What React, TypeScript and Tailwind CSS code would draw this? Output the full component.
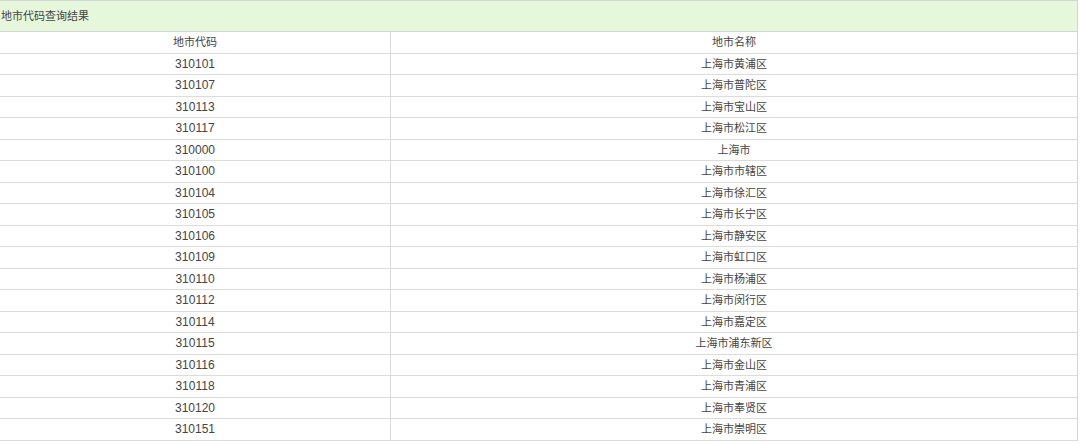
const rows: [string, string][] = [
  ['310101', '上海市黄浦区'],
  ['310107', '上海市普陀区'],
  ['310113', '上海市宝山区'],
  ['310117', '上海市松江区'],
  ['310000', '上海市'],
  ['310100', '上海市市辖区'],
  ['310104', '上海市徐汇区'],
  ['310105', '上海市长宁区'],
  ['310106', '上海市静安区'],
  ['310109', '上海市虹口区'],
  ['310110', '上海市杨浦区'],
  ['310112', '上海市闵行区'],
  ['310114', '上海市嘉定区'],
  ['310115', '上海市浦东新区'],
  ['310116', '上海市金山区'],
  ['310118', '上海市青浦区'],
  ['310120', '上海市奉贤区'],
  ['310151', '上海市崇明区'],
];

export default function App() {
  return (
    <div
      className="w-[1080px] h-[444px] bg-white overflow-hidden text-[12px] text-[#444]"
      style={{ fontFamily: '"Liberation Sans", Arial, "Noto Sans CJK SC", sans-serif' }}
    >
      <div className="w-[1078px] border-r border-[#d4d4d4]">
        {/* Title bar */}
        <div className="h-[32px] flex items-center pl-px text-[11px] bg-[#e6f7dc] border-t border-[#cfe3c6] border-b border-[#d4d4d4]">
          地市代码查询结果
        </div>

        {/* Table */}
        <div className="grid grid-cols-[391px_1fr]">
          <div className="h-[21.5px] flex items-center justify-center text-[11px] border-b border-[#dcdcdc] border-r">
            地市代码
          </div>
          <div className="h-[21.5px] flex items-center justify-center text-[11px] border-b border-[#dcdcdc]">
            地市名称
          </div>
          {rows.map(([code, name]) => (
            <div key={code} className="contents">
              <div className="h-[21.5px] flex items-center justify-center border-b border-r border-[#dcdcdc]">
                {code}
              </div>
              <div className="h-[21.5px] flex items-center justify-center text-[11px] border-b border-[#dcdcdc]">
                {name}
              </div>
            </div>
          ))}
        </div>
      </div>
    </div>
  );
}
